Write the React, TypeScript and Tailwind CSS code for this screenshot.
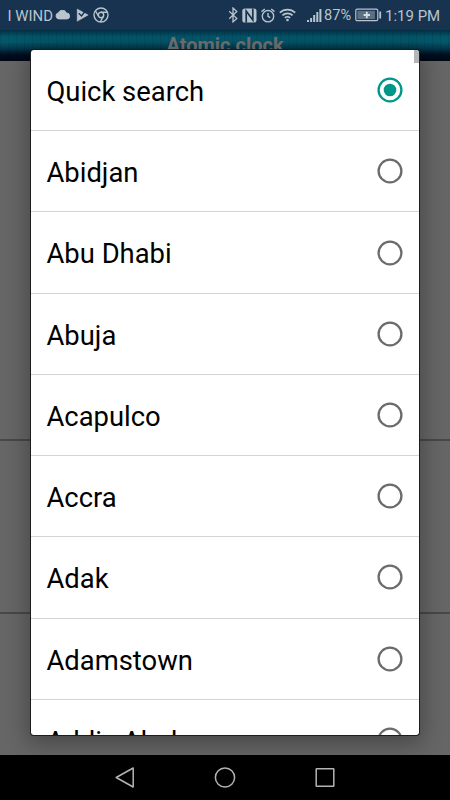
import React from 'react'

const cities = [
  'Quick search',
  'Abidjan',
  'Abu Dhabi',
  'Abuja',
  'Acapulco',
  'Accra',
  'Adak',
  'Adamstown',
  'Addis Ababa',
]

function Radio({ checked }: { checked: boolean }) {
  return (
    <svg
      className={`h-[26px] w-[26px] shrink-0 ${checked ? 'text-[#009688]' : 'text-[#6b6b6b]'}`}
      viewBox="0 0 26 26"
      fill="none"
    >
      <circle cx="13" cy="13" r="11.4" stroke="currentColor" strokeWidth="2.3" />
      {checked && <circle cx="13" cy="13" r="6.3" fill="currentColor" />}
    </svg>
  )
}

function StatusBar() {
  return (
    <div className="flex h-[30px] items-center bg-[#17334f] pl-[7.5px] pr-[10px] text-[15px] leading-[30px] text-[#b9c4cd]">
      <span className="w-[47.5px] whitespace-nowrap pt-px text-[14.9px]">I WIND</span>

      {/* Notifications */}
      <svg className="h-[10px] w-[15px]" viewBox="0 0 15 10" fill="currentColor">
        <path d="M4.2 9A3.2 3.2 0 0 1 3.4 2.7 4.3 4.3 0 0 1 11.4 3 3 3 0 0 1 12 9z" stroke="currentColor" strokeWidth=".8" />
      </svg>
      <svg className="ml-[6px] h-[14px] w-[13px]" viewBox="0 0 13 14">
        <path d="M1.2 1 12.2 7 1.2 13.3z" fill="currentColor" stroke="currentColor" strokeWidth=".5" />
        <path d="M2.8 5.2 5.5 7.9 10 2.3" fill="none" stroke="#17334f" strokeWidth="1.4" />
      </svg>
      <svg className="ml-[4px] h-[16px] w-[16px]" viewBox="0 0 16 16" fill="none" stroke="currentColor" strokeWidth="1.4">
        <circle cx="8" cy="8" r="7" />
        <circle cx="8" cy="8" r="2.7" />
        <path d="M8 5.3h6.1M5.7 9.4 2.5 4M10.3 9.4 7.3 14.8" />
      </svg>

      {/* System indicators */}
      <svg className="ml-auto h-[16px] w-[11px]" viewBox="0 0 11 16" fill="none" stroke="currentColor" strokeWidth="1.3">
        <path d="m1.2 4.2 7.6 7.2L5 14.9V1l3.8 3.5-7.6 7.2" />
      </svg>
      <svg className="ml-[3px] h-[15px] w-[15px]" viewBox="0 0 15 15">
        <rect x=".3" y=".5" width="14.2" height="14" rx="2.6" fill="currentColor" />
        <path d="M4.2 14.5V3l6.6 9V.5" fill="none" stroke="#17334f" strokeWidth="1.7" />
      </svg>
      <svg className="ml-[4px] h-[15px] w-[14px]" viewBox="0 0 14 15" fill="none" stroke="currentColor" strokeWidth="1.4">
        <circle cx="7" cy="8.2" r="5.7" />
        <path d="M7 5v3.4l2.3 1.3M.5 3.6 3.8 1M13.5 3.6 10.2 1" />
      </svg>
      <svg className="ml-[4px] h-[14px] w-[17px]" viewBox="0 0 17 14" fill="none" stroke="currentColor" strokeWidth="1.7">
        <path d="M.8 4.7a11 11 0 0 1 15.4 0M3.4 7.4a7.2 7.2 0 0 1 10.2 0M5.9 10a3.7 3.7 0 0 1 5.2 0" />
        <circle cx="8.5" cy="12" r="1.3" fill="currentColor" stroke="none" />
      </svg>
      <svg className="ml-[11px] h-[15px] w-[15px]" viewBox="0 0 15 15" fill="currentColor">
        <path d="M0 12h2v2H0zM3.1 10h2v4h-2zM6.2 7h2v7h-2zM9.3 4h2v10h-2zM12.4 1h2v13h-2z" />
      </svg>
      <span className="ml-[2px] w-[28px] whitespace-nowrap text-[14.6px]">87%</span>
      <svg className="ml-[3px] h-[14px] w-[27px]" viewBox="0 0 27 14">
        <rect x=".8" y="1.2" width="22" height="11.5" rx="1.5" fill="none" stroke="currentColor" strokeWidth="1.2" />
        <rect x="2.4" y="2.8" width="17.5" height="8.3" fill="#5b7183" />
        <path d="M11.8 3.8v6.4M8.6 7H15" stroke="#d5dce1" strokeWidth="1.8" />
        <path d="M25.2 3.5v7" stroke="currentColor" strokeWidth="1.8" />
      </svg>
      <span className="ml-[3px] w-[55px] whitespace-nowrap pt-px text-[15px]">1:19 PM</span>
    </div>
  )
}

function CityDialog() {
  return (
    <div className="absolute left-[31px] top-[50px] h-[685px] w-[388px] overflow-hidden rounded-[3px] bg-white shadow-[0_0_0_1px_#1c1c1c,0_5px_22px_4px_rgba(0,0,0,0.3)]">
      {cities.map((city, i) => (
        <div
          key={city}
          className="flex h-[81.22px] items-center justify-between border-b border-[#d4d4d4] pl-[15.5px] pr-[16px] text-[27.4px] text-black"
        >
          <span className="pt-[5px]">{city}</span>
          <Radio checked={i === 0} />
        </div>
      ))}
      {/* Scrollbar thumb */}
      <div className="absolute right-0 top-0 h-[13px] w-[5px] bg-[#b5b5b5]" />
    </div>
  )
}

function NavBar() {
  return (
    <div className="flex h-[45px] items-center justify-center gap-[76px] bg-black text-[#b4b4b4]">
      <svg className="h-6 w-6" viewBox="0 0 24 24" fill="none" stroke="currentColor" strokeWidth="1.5">
        <path d="M20.2 2v19L3.2 11.5z" strokeLinejoin="round" />
      </svg>
      <svg className="h-6 w-6" viewBox="0 0 24 24" fill="none" stroke="currentColor" strokeWidth="1.5">
        <circle cx="12" cy="11.5" r="9.6" />
      </svg>
      <svg className="h-6 w-6" viewBox="0 0 24 24" fill="none" stroke="currentColor" strokeWidth="1.5">
        <rect x="3.2" y="2.7" width="17.6" height="17.6" rx=".5" />
      </svg>
    </div>
  )
}

export default function App() {
  return (
    <div className="relative flex h-[800px] w-[450px] flex-col overflow-hidden font-[Roboto,sans-serif]">
      <StatusBar />

      {/* Title, on a faint vertical grid */}
      <div className="h-[31px] overflow-hidden bg-[repeating-linear-gradient(to_right,rgba(0,0,0,0.08)_0_1px,transparent_1px_8px),linear-gradient(to_bottom,#032f43_0%,#04566b_22%,#04576b_38%,#033a4e_58%,#010e20_80%,#010715_100%)] text-center text-[20px] font-bold leading-[31px] text-[#737373]">
        Atomic clock
      </div>

      {/* Page behind the dialog */}
      <div className="flex flex-1 flex-col bg-[#666]">
        <div className="h-[380px] border-b-2 border-b-[#484848]" />
        <div className="h-[173px] border-b-2 border-b-[#484848]" />
      </div>

      <CityDialog />
      <div className="relative">
        <NavBar />
      </div>
    </div>
  )
}
